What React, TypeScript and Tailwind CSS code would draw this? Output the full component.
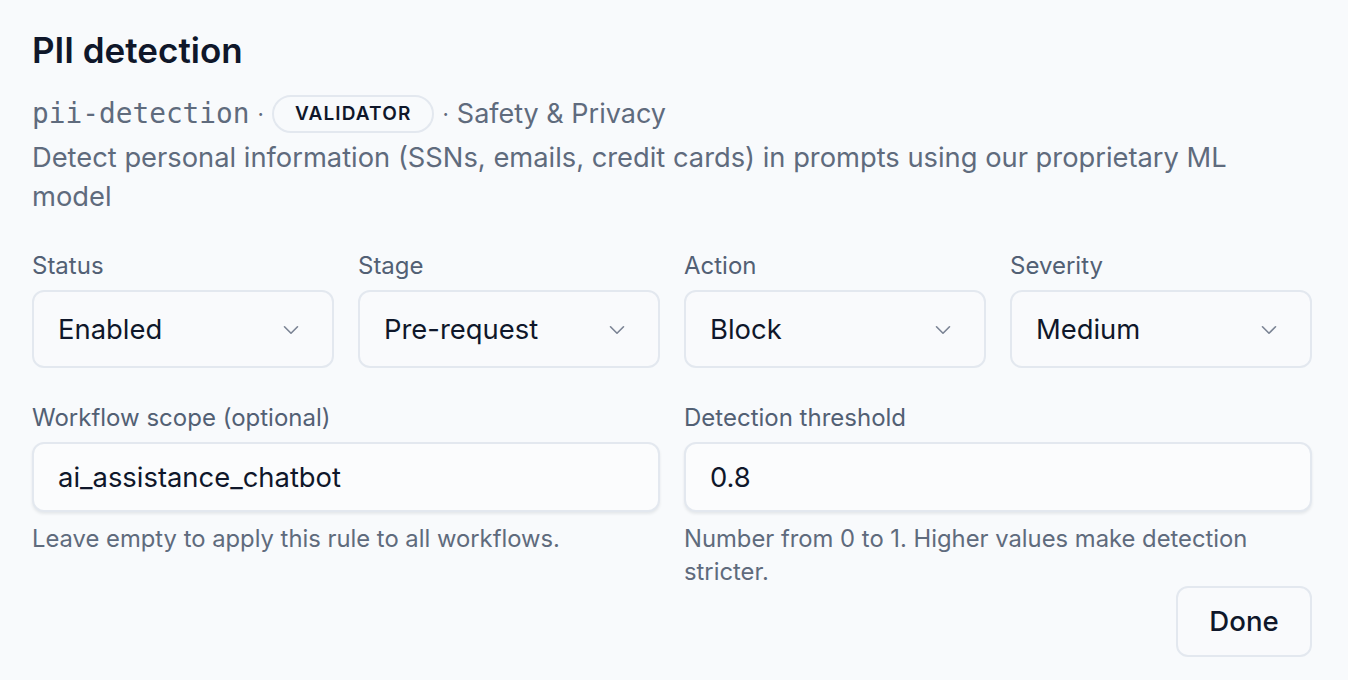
import React from 'react';
import { ChevronDown } from 'lucide-react';

// ─── Select-like field ───────────────────────────────────────────────────────
function SelectField({ label, value }: { label: string; value: string }) {
  return (
    <div className="flex flex-col">
      <label className="text-[24px] leading-[32px] text-[#526074] mb-2">{label}</label>
      <div className="h-[78px] rounded-[12px] border-2 border-[#e3e8ef] bg-[#f9fafc] flex items-center justify-between pl-[24px] pr-[28px] pt-[2px]">
        <span className="text-[27.4px] text-[#0f172a]">{value}</span>
        <ChevronDown size={26} strokeWidth={1.5} className="text-[#7b8494]" />
      </div>
    </div>
  );
}

// ─── Text input field with helper ────────────────────────────────────────────
function InputField({ label, value, help }: { label: string; value: string; help: string }) {
  return (
    <div className="flex flex-col">
      <label className="text-[24px] leading-[32px] text-[#526074] mb-2">{label}</label>
      <div className="h-[70px] rounded-[12px] border-2 border-[#e3e8ef] bg-[#fbfcfd] shadow-[0_2px_3px_rgba(15,23,42,0.08)] flex items-center pl-[24px] pt-[2px]">
        <span className="text-[27.4px] text-[#0f172a]">{value}</span>
      </div>
      <p className="mt-[10px] text-[23.8px] leading-[33px] text-[#5f6b7d]">{help}</p>
    </div>
  );
}

export default function App() {
  return (
    <div className="min-h-screen bg-[#f8fafc] pl-8 pr-9 pt-[30px] font-['Inter',sans-serif]">
      <h1 className="text-[35px] leading-[40px] font-semibold text-[#0f172a]">PII detection</h1>

      <div className="mt-6 flex items-center h-[40px] text-[#5f6b7d]">
        <span className="font-['DejaVu_Sans_Mono',monospace] text-[27.8px]">pii-detection</span>
        <span className="mx-[8px] text-[22px]">·</span>
        <span className="h-[38px] px-[21px] rounded-full border-2 border-[#e3e8ef] flex items-center text-[19px] font-semibold tracking-[0.06em] text-[#0f172a]">
          VALIDATOR
        </span>
        <span className="mx-[8px] text-[22px]">·</span>
        <span className="text-[27px]">Safety &amp; Privacy</span>
      </div>

      <p className="mt-1 text-[27.3px] leading-[39px] text-[#5f6b7d] pr-[60px]">
        Detect personal information (SSNs, emails, credit cards) in prompts using our proprietary ML model
      </p>

      <div className="mt-[34px] grid grid-cols-4 gap-x-6">
        <SelectField label="Status" value="Enabled" />
        <SelectField label="Stage" value="Pre-request" />
        <SelectField label="Action" value="Block" />
        <SelectField label="Severity" value="Medium" />
      </div>

      <div className="mt-[34px] grid grid-cols-2 gap-x-6">
        <InputField
          label="Workflow scope (optional)"
          value="ai_assistance_chatbot"
          help="Leave empty to apply this rule to all workflows."
        />
        <InputField
          label="Detection threshold"
          value="0.8"
          help="Number from 0 to 1. Higher values make detection stricter."
        />
      </div>

      <div className="flex justify-end -mt-[2px]">
        <button className="h-[71px] w-[136px] rounded-[12px] border-2 border-[#e3e8ef] bg-[#f9fafc] text-[27.6px] font-medium text-[#0f172a]">
          Done
        </button>
      </div>
    </div>
  );
}
